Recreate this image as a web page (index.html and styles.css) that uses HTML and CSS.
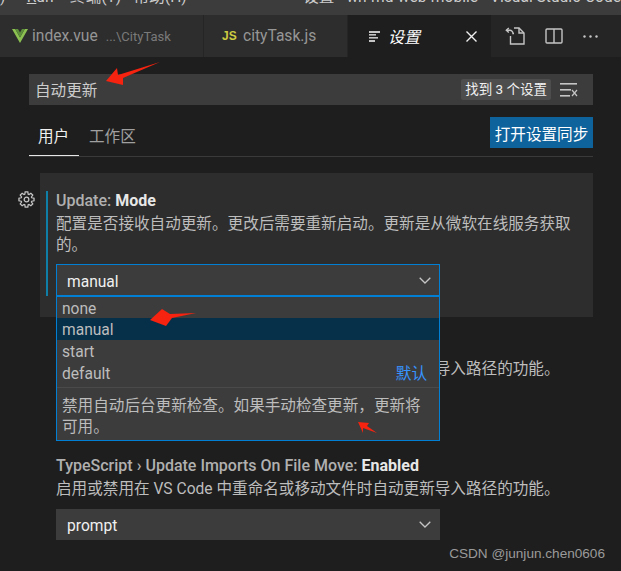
FILE: index.html
```html
<!DOCTYPE html>
<html lang="zh">
<head>
  <meta charset="utf-8">
  <title>设置 - wh-md-web-mobile - Visual Studio Code</title>
  <link rel="stylesheet" href="styles.css">
</head>
<body>
  <!-- Window title bar, only the bottom of it is on screen -->
  <div class="titlebar">
    <div class="titlebar-menu">
      <span class="menu-a">)</span>
      <span class="menu-b"><u>R</u>un</span>
      <span class="menu-c">终端(T)</span>
      <span class="menu-d">帮助(H)</span>
      <span class="menu-title">设置 - wh-md-web-mobile - Visual Studio Code</span>
    </div>
  </div>

  <!-- Editor tabs -->
  <div class="tabbar">
    <div class="tab tab-vue">
      <svg class="tab-icon" width="16" height="14" viewBox="0 0 16 14"><polygon points="0,0 3.2,0 8,8.4 12.8,0 16,0 8,14" fill="#8cc152"/><polygon points="3.2,0 6,0 8,3.6 10,0 12.8,0 8,8.4" fill="#5e8f3a"/></svg>
      <span class="tab-name">index.vue</span>
      <span class="tab-path">...\CityTask</span>
    </div>
    <div class="tab tab-js">
      <span class="js-icon">JS</span>
      <span class="tab-name">cityTask.js</span>
    </div>
    <div class="tab tab-active">
      <svg class="tab-icon" width="11" height="11" viewBox="0 0 11 11" fill="#c5c5c5"><rect x="0" y="0" width="11" height="2"/><rect x="0" y="3" width="7" height="1.6"/><rect x="0" y="6" width="9" height="1.6"/><rect x="0" y="9" width="6" height="2"/></svg>
      <span class="tab-name-active">设置</span>
      <svg class="tab-close" width="11" height="11" viewBox="0 0 11 11"><path d="M0.5 0.5L10.5 10.5M10.5 0.5L0.5 10.5" stroke="#f0f0f0" stroke-width="1.4" fill="none"/></svg>
    </div>
    <div class="tab-actions">
      <svg width="20" height="18" viewBox="0 0 20 18" fill="none" stroke="#c5c5c5" stroke-width="1.4"><path d="M5.5 9V17H19V6L14 1H9"/><path d="M14 1V6H19"/><path d="M9 6.5H8C8 4.5 6.5 3.3 5 3.3H1.5"/><path d="M3.8 1L1.3 3.3L3.8 5.6"/></svg>
      <svg width="18" height="16" viewBox="0 0 18 16" fill="none" stroke="#c5c5c5" stroke-width="1.4"><rect x="1" y="1" width="16" height="14" rx="1"/><path d="M9 1V15"/></svg>
      <svg width="15" height="3" viewBox="0 0 15 3" fill="#c5c5c5"><circle cx="1.5" cy="1.5" r="1.2"/><circle cx="7.5" cy="1.5" r="1.2"/><circle cx="13.5" cy="1.5" r="1.2"/></svg>
    </div>
  </div>

  <div class="settings">
    <!-- Search box -->
    <div class="search">
      <span class="search-text">自动更新</span>
      <span class="search-count">找到 3 个设置</span>
      <svg class="search-clear" width="18" height="14" viewBox="0 0 18 14" fill="#c5c5c5"><rect x="0" y="0" width="17" height="1.6"/><rect x="0" y="6" width="11" height="1.6"/><rect x="0" y="12" width="10" height="1.6"/><path d="M12 7L17 13M17 7L12 13" stroke="#c5c5c5" stroke-width="1.2"/></svg>
    </div>

    <!-- User / workspace switch -->
    <div class="scope">
      <div class="scope-tabs">
        <span class="scope-tab scope-tab-active">用户</span>
        <span class="scope-tab">工作区</span>
      </div>
      <button class="sync-btn">打开设置同步</button>
    </div>

    <!-- Focused setting -->
    <div class="row-focused">
      <svg class="gear" width="17" height="17" viewBox="0 0 16 16" fill="none" stroke="#c5c5c5" stroke-width="1.2"><path d="M6.4 3.05L6.75 .91H9.25L9.6 3.05L10.36 3.37L12.13 2.1L13.9 3.87L12.63 5.64L12.95 6.4L15.09 6.75V9.25L12.95 9.6L12.63 10.36L13.9 12.13L12.13 13.9L10.36 12.63L9.6 12.95L9.25 15.09H6.75L6.4 12.95L5.64 12.63L3.87 13.9L2.1 12.13L3.37 10.36L3.05 9.6L.91 9.25V6.75L3.05 6.4L3.37 5.64L2.1 3.87L3.87 2.1L5.64 3.37Z"/><circle cx="8" cy="8" r="2.2"/></svg>
      <div class="card">
        <div class="card-inner">
          <div class="setting-title">Update: <b>Mode</b></div>
          <div class="setting-desc setting-desc-wrap">配置是否接收自动更新。更改后需要重新启动。更新是从微软在线服务获取的。</div>
          <div class="select select-open">
            <span>manual</span>
            <svg class="chevron" width="12" height="7" viewBox="0 0 12 7"><path d="M0.7 0.7L6 6L11.3 0.7" stroke="#c5c5c5" stroke-width="1.3" fill="none"/></svg>
            <!-- Open dropdown list -->
            <div class="dropdown">
              <div class="option">none</div>
              <div class="option option-selected">manual</div>
              <div class="option">start</div>
              <div class="option option-default">default<span class="default-tag">默认</span></div>
              <div class="dropdown-desc">禁用自动后台更新检查。如果手动检查更新，更新将可用。</div>
            </div>
          </div>
        </div>
      </div>
    </div>

    <div class="setting">
      <div class="setting-title">JavaScript › Update Imports On File Move: <b>Enabled</b></div>
      <div class="setting-desc">启用或禁用在 VS Code 中重命名或移动文件时自动更新导入路径的功能。</div>
      <div class="select">
        <span>prompt</span>
        <svg class="chevron" width="12" height="7" viewBox="0 0 12 7"><path d="M0.7 0.7L6 6L11.3 0.7" stroke="#c5c5c5" stroke-width="1.3" fill="none"/></svg>
      </div>
    </div>

    <div class="setting">
      <div class="setting-title">TypeScript › Update Imports On File Move: <b>Enabled</b></div>
      <div class="setting-desc">启用或禁用在 VS Code 中重命名或移动文件时自动更新导入路径的功能。</div>
      <div class="select">
        <span>prompt</span>
        <svg class="chevron" width="12" height="7" viewBox="0 0 12 7"><path d="M0.7 0.7L6 6L11.3 0.7" stroke="#c5c5c5" stroke-width="1.3" fill="none"/></svg>
      </div>
    </div>
  </div>

  <!-- Red arrows drawn on top of the window -->
  <svg class="arrows" width="621" height="571" viewBox="0 0 621 571" fill="#f5230f">
    <polygon points="106,81 117,68 118,75 160,62 123,78 123,85"/>
    <polygon points="150,320 162,309 170,314 196,313 172,318 166,326"/>
    <polygon points="358,422 369,423 367,426 377,433 363,428 363,433"/>
  </svg>

  <div class="watermark">CSDN @junjun.chen0606</div>
</body>
</html>
```

FILE: styles.css
```css
/* Page base */
* {
  box-sizing: border-box;
}

body {
  margin: 0;
  width: 621px;
  height: 571px;
  overflow: hidden;
  position: relative;
  background-color: #1e1e1e;
  color: #c0c0c0;
  font-family: Roboto, "Noto Sans CJK SC", sans-serif;
  font-size: 15.6px;
}

/* Title bar */
.titlebar {
  height: 15px;
  background-color: #3c3c3c;
  overflow: hidden;
}

.titlebar-menu {
  display: flex;
  height: 20px;
  margin-top: -13px;
  line-height: 20px;
  color: #cccccc;
  white-space: nowrap;
}

.menu-a {
  width: 29px;
}

.menu-b {
  width: 47px;
}

.menu-c {
  width: 69px;
}

.menu-d {
  width: 184px;
}

/* Editor tabs */
.tabbar {
  display: flex;
  height: 42px;
  background-color: #252526;
}

.tab {
  display: flex;
  align-items: center;
  background-color: #2d2d2d;
  border-right: 1px solid #252526;
  white-space: nowrap;
}

.tab-vue {
  width: 204px;
  padding-left: 12px;
}

.tab-js {
  width: 144px;
  padding-left: 18px;
}

.tab-active {
  width: 143px;
  padding-left: 21px;
  background-color: #1e1e1e;
  border-right: 0;
}

.tab-icon {
  flex: none;
}

.tab-name {
  margin-left: 4px;
  font-size: 15.6px;
  color: #969696;
}

.tab-path {
  margin-left: 8px;
  font-size: 13px;
  color: #7a7a7a;
}

.js-icon {
  font-family: "Liberation Sans", sans-serif;
  font-size: 12px;
  font-weight: bold;
  color: #cbcb41;
  width: 14px;
}

.tab-js .tab-name {
  margin-left: 7px;
}

.tab-name-active {
  margin-left: 8px;
  font-style: italic;
  font-size: 16px;
  color: #ffffff;
}

.tab-close {
  margin-left: auto;
  margin-right: 14px;
}

.tab-actions {
  flex: 1;
  display: flex;
  align-items: center;
  padding-left: 14px;
  gap: 20px;
  background-color: #252526;
}

/* Settings editor */
.settings {
  padding: 17px 28px 0 0;
}

.search {
  display: flex;
  align-items: center;
  height: 31px;
  margin-left: 29px;
  padding: 0 15px 0 6px;
  background-color: #3c3c3c;
}

.search-text {
  flex: 1;
  margin-top: -2px;
  color: #cccccc;
}

.search-count {
  padding: 1px 4px;
  border-radius: 2px;
  background-color: #4d4d4d;
  color: #f0f0f0;
  font-size: 13.5px;
  line-height: 19px;
  white-space: nowrap;
}

.search-clear {
  margin-left: 9px;
}

.scope {
  display: flex;
  justify-content: space-between;
  align-items: flex-start;
  height: 52px;
  margin-left: 29px;
  padding-top: 12px;
  border-bottom: 1px solid #3a3a3a;
}

.scope-tabs {
  display: flex;
  align-self: flex-end;
}

.scope-tab {
  padding: 0 10px;
  height: 39px;
  line-height: 40px;
  color: #a0a0a0;
  white-space: nowrap;
}

.scope-tab-active {
  width: 50px;
  padding: 0 9px;
  color: #f0f0f0;
  border-bottom: 1px solid #e7e7e7;
  margin-bottom: -1px;
}

.sync-btn {
  width: 103px;
  height: 31px;
  padding: 0;
  border: none;
  background-color: #0e639c;
  color: #ffffff;
  font-family: inherit;
  font-size: 15.6px;
}

/* Focused setting row */
.row-focused {
  display: flex;
  margin-top: 16px;
  padding-left: 18px;
}

.gear {
  margin: 18px 5px 0 0;
  flex: none;
}

.card {
  flex: 1;
  padding: 18px 0 21px 6px;
  background-color: #2d2d2d;
}

.card-inner {
  padding-left: 8px;
  border-left: 2px solid #0f7fa8;
}

.setting-title {
  height: 17px;
  line-height: 20px;
  font-size: 16px;
  font-weight: 500;
  color: #b0b0b0;
  white-space: nowrap;
}

.setting-title b {
  font-weight: 700;
  color: #e7e7e7;
}

.setting-desc {
  margin-top: 6px;
  line-height: 21px;
  color: #bdbdbd;
}

.setting-desc-wrap {
  width: 522px;
  margin-bottom: 8px;
}

.select {
  position: relative;
  display: flex;
  justify-content: space-between;
  align-items: center;
  width: 384px;
  height: 31px;
  padding: 0 9px 0 11px;
  background-color: #3c3c3c;
  color: #f0f0f0;
}

.select > span {
  padding-top: 3px;
}

.select-open {
  height: 32px;
  border: 1px solid #007fd4;
  padding: 0 8px 0 10px;
}

.setting {
  margin: 19px 0 36px 56px;
}

.setting + .setting {
  margin-top: 36px;
}

.setting .select {
  margin-top: 9px;
}

/* Dropdown list over the rows below */
.dropdown {
  position: absolute;
  top: 31px;
  left: -1px;
  width: 384px;
  height: 145px;
  background-color: #3c3c3c;
  border: 1px solid #007fd4;
  color: #bdbdbd;
  z-index: 5;
}

.option {
  display: flex;
  justify-content: space-between;
  height: 22px;
  line-height: 24px;
  padding: 0 12px 0 5px;
}

.option:first-child {
  height: 21px;
}

.option-selected {
  background-color: #062f4a;
}

.default-tag {
  color: #3794ff;
}

.dropdown-desc {
  margin-top: 3px;
  padding: 8px 12px 0 5px;
  border-top: 1px solid #4a4a4a;
  line-height: 21px;
}

/* Red arrows and watermark */
.arrows {
  position: absolute;
  top: 0;
  left: 0;
  z-index: 10;
}

.watermark {
  position: absolute;
  right: 16px;
  bottom: 10px;
  font-family: "Liberation Sans", sans-serif;
  font-size: 13.6px;
  color: #9a9a9a;
  z-index: 10;
}
```
